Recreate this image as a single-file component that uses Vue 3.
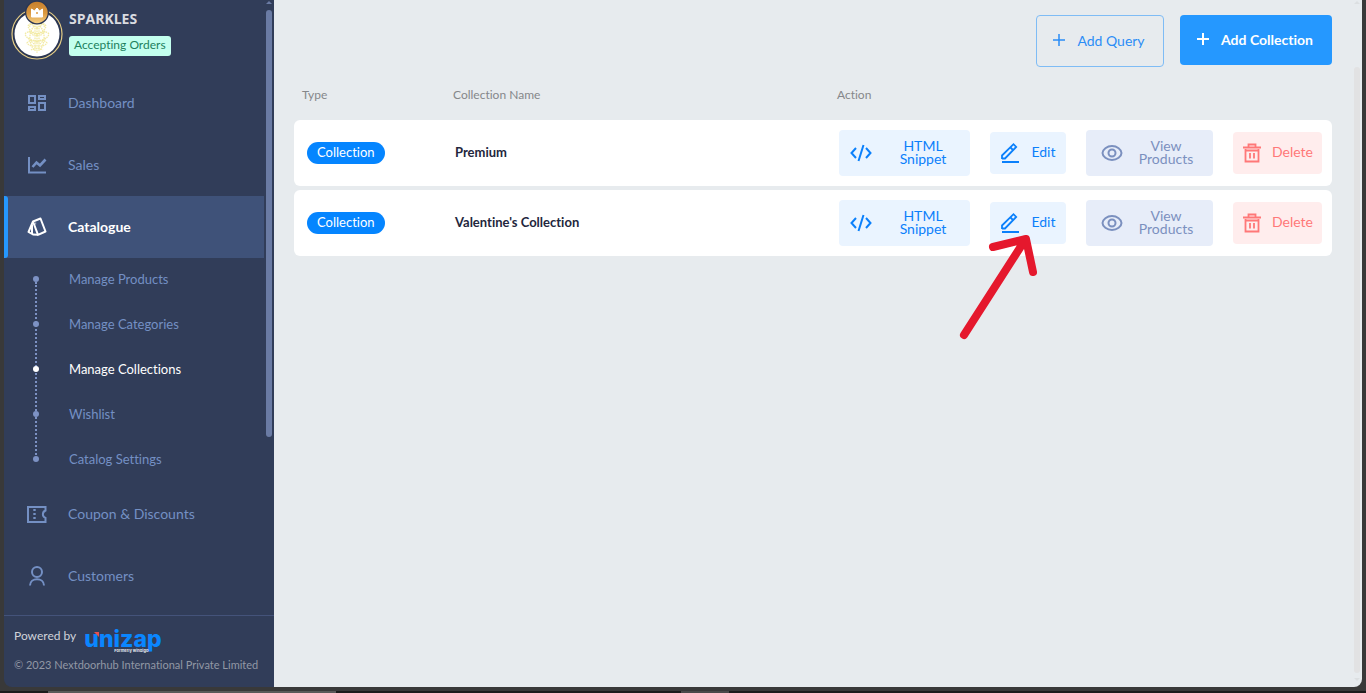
<script setup>
import { ref } from 'vue'

const topItems = [
  { label: 'Dashboard', icon: 'grid' },
  { label: 'Sales', icon: 'chart' },
  { label: 'Catalogue', icon: 'cards', active: true },
]
const subItems = ['Manage Products', 'Manage Categories', 'Manage Collections', 'Wishlist', 'Catalog Settings']
const currentSub = ref('Manage Collections')
const bottomItems = [
  { label: 'Coupon & Discounts', icon: 'coupon' },
  { label: 'Customers', icon: 'person' },
]
const collections = [
  { type: 'Collection', name: 'Premium' },
  { type: 'Collection', name: "Valentine's Collection" },
]
</script>

<template>
  <div class="screen">
    <div class="window">
      <aside class="sidebar">
        <div class="side-scroll">
          <header class="profile">
            <svg class="avatar" viewBox="0 0 52 60" aria-hidden="true">
              <defs>
                <linearGradient id="gold" x1="0" y1="0" x2="0" y2="1">
                  <stop offset="0" stop-color="#c77f2c" />
                  <stop offset=".55" stop-color="#dc9a41" />
                  <stop offset="1" stop-color="#f5cf83" />
                </linearGradient>
              </defs>
              <circle cx="26" cy="34" r="25" fill="#2b3652" stroke="#e5cd86" stroke-width="1.2" />
              <circle cx="26" cy="34" r="22.5" fill="#fff" />
              <g fill="none" stroke="#f3eba6" stroke-width="1.3" stroke-dasharray="1.600 .8">
                <path d="M26 21v32M26 29c-4-6-8-5-9-3 1 5 5 6 9 8M26 29c4-6 8-5 9-3-1 5-5 6-9 8M26 36c-5-5-10-5-12-2 2 6 8 6 12 7M26 36c5-5 10-5 12-2-2 6-8 6-12 7M26 42c-4-2-8-2-10 1 3 4 7 3 10 3M26 42c4-2 8-2 10 1-3 4-7 3-10 3M20 50c3-2 9-2 12 0M22 24c-3-2-4 1-3 3M30 24c3-2 4 1 3 3" />
                <path d="M23 26c-5 6-6 16 0 24M29 26c5 6 6 16 0 24M17 38l6 6M35 38l-6 6M18 31l5 5M34 31l-5 5M24 23v28M28 23v28" />
              </g>
              <circle cx="26" cy="12.5" r="12" fill="#2b3652" />
              <circle cx="26" cy="12.5" r="10.7" fill="url(#gold)" />
              <path d="M20.500 9l3 2 2.500-3 2.500 3 3-2v8h-11z" fill="#fff" stroke="#fff" stroke-linejoin="round" />
              <circle cx="26" cy="13" r="1" fill="#dc9a41" />
            </svg>
            <div class="profile-text">
              <strong class="shop">SPARKLES</strong>
              <span class="status">Accepting Orders</span>
            </div>
          </header>
          <nav>
            <a v-for="item in topItems" :key="item.label" href="#" class="nav-item" :class="{ active: item.active }">
              <svg v-if="item.icon === 'grid'" class="nav-icon" viewBox="0 0 20 20" fill="none" stroke="currentColor" stroke-width="2">
                <path d="M2 3h6v7H2zM12 3h6v3h-6zM12 10h6v7h-6zM2 14h6v3H2z" />
              </svg>
              <svg v-else-if="item.icon === 'chart'" class="nav-icon" viewBox="0 0 20 20" fill="none" stroke="currentColor">
                <path d="M2 2v15.5h17" stroke-width="2" />
                <path d="M5.500 12l4-4.500 3.500 3L18.500 4.500" stroke-width="2.600" />
              </svg>
              <svg v-else class="nav-icon" viewBox="0 0 20 20" fill="none" stroke="currentColor" stroke-width="2" stroke-linejoin="round">
                <path d="M6 4.500L13.500 1.500l5 13-7.500 3.300z" />
                <path d="M6 4.500L1.500 15l4.500 2.500 5 .3M5 8v9" />
                <path d="M8.500 6.500h.6" />
              </svg>
              <span>{{ item.label }}</span>
            </a>
            <ul class="sub-list">
              <li v-for="sub in subItems" :key="sub">
                <a href="#" class="sub-item" :class="{ current: sub === currentSub }" @click.prevent="currentSub = sub">{{ sub }}</a>
              </li>
            </ul>
            <a v-for="item in bottomItems" :key="item.label" href="#" class="nav-item">
              <svg v-if="item.icon === 'coupon'" class="nav-icon" viewBox="0 0 20 20" fill="none" stroke="currentColor" stroke-width="2">
                <path d="M1 3h17.500v3.500c-3.500 1.500-3.500 6 0 7.500V18H1z" />
                <path d="M7.500 5v12" stroke-dasharray="2 2" stroke-width="2.400" />
              </svg>
              <svg v-else class="nav-icon" viewBox="0 0 20 20" fill="none" stroke="currentColor" stroke-width="2">
                <circle cx="10" cy="6" r="5" />
                <path d="M3 19.500c0-8.500 14-8.500 14 0" />
              </svg>
              <span>{{ item.label }}</span>
            </a>
          </nav>
          <div class="side-bar" aria-hidden="true"><i class="up"></i><i class="thumb"></i></div>
        </div>
        <footer class="side-footer">
          <div class="powered">
            <span>Powered by</span>
            <span class="brand">unizap<svg class="spark" viewBox="0 0 5 5" aria-hidden="true"><path d="M0 0h5v5z" fill="#e8504f" /></svg><small>Formerly windigo</small></span>
          </div>
          <p class="copyright">© 2023 Nextdoorhub International Private Limited</p>
        </footer>
      </aside>

      <main class="content">
        <div class="toolbar">
          <button type="button" class="add outline">
            <svg viewBox="0 0 14 14" aria-hidden="true"><path d="M7 1v12M1 7h12" stroke="currentColor" stroke-width="1.500" /></svg>
            Add Query
          </button>
          <button type="button" class="add solid">
            <svg viewBox="0 0 14 14" aria-hidden="true"><path d="M7 1v12M1 7h12" stroke="currentColor" stroke-width="2" /></svg>
            Add Collection
          </button>
        </div>
        <table>
          <colgroup><col class="c-type" /><col class="c-name" /><col class="c-action" /></colgroup>
          <thead>
            <tr><th scope="col">Type</th><th scope="col">Collection Name</th><th scope="col">Action</th></tr>
          </thead>
          <tbody>
            <tr v-for="(row, i) in collections" :key="row.name">
              <td><span class="pill">{{ row.type }}</span></td>
              <td class="name">{{ row.name }}</td>
              <td>
                <div class="actions">
                  <button type="button" class="act blue snippet">
                    <svg viewBox="0 0 22 22" fill="none" stroke="currentColor" stroke-width="2"><path d="M6 6L1.500 11 6 16M16 6l4.500 5-4.500 5M13.500 3L8.500 19" /></svg>
                    <span>HTML<br />Snippet</span>
                  </button>
                  <button type="button" class="act blue edit">
                    <svg viewBox="0 0 22 22" fill="none" stroke="currentColor" stroke-width="1.800"><path d="M3 17v-3.500L14.500 2.200l2.700 2.700L6 16.500H3M3 20h17M11.500 5.500l2.500 2.500" /></svg>
                    <span>Edit</span>
                    <svg v-if="i === 1" class="pointer" viewBox="0 0 80 108" fill="none" stroke="#e5182d" stroke-width="8" stroke-linecap="round" stroke-linejoin="round" aria-hidden="true"><path d="M5 101L66 6M34 13l33-8 7 33" /></svg>
                  </button>
                  <button type="button" class="act slate view">
                    <svg viewBox="0 0 22 22" fill="none" stroke="currentColor" stroke-width="2"><path d="M1.500 11c0-3.500 4.500-7 9.500-7s9.500 3.500 9.500 7-4.500 7-9.500 7-9.500-3.500-9.500-7z" /><circle cx="11" cy="11" r="3.500" /></svg>
                    <span>View<br />Products</span>
                  </button>
                  <button type="button" class="act red delete">
                    <svg viewBox="0 0 22 22" fill="none" stroke="currentColor" stroke-width="1.800"><path d="M4.500 7v12.500h13V7M2 5.500h18M7.500 5V2.500h7V5M9 11v5.500M13 11v5.500M4.500 8.500h13" /></svg>
                    <span>Delete</span>
                  </button>
                </div>
              </td>
            </tr>
          </tbody>
        </table>
        <div class="main-bar" aria-hidden="true"><i class="up"></i><i class="thumb"></i><i class="down"></i></div>
      </main>
    </div>
    <div class="taskbar" aria-hidden="true"><i></i><i></i></div>
  </div>
</template>

<style>
html, body { margin: 0; background: #393939; }
</style>

<style scoped>
* { box-sizing: border-box; }
.screen {
  height: 100vh; display: flex; flex-direction: column; overflow: hidden;
  background: #393939; font-family: Lato, "Open Sans", sans-serif; font-size: 13px;
  font-variant-ligatures: none;
}
.window {
  flex: 1; min-height: 0; margin: 0 4px 4px; display: grid; grid-template-columns: 270px 1fr;
  border-radius: 0 0 8px 8px; overflow: hidden;
}
a { color: inherit; text-decoration: none; }
button { font: inherit; cursor: pointer; border: 0; }
i { display: block; }

.sidebar { display: flex; flex-direction: column; min-height: 0; background: #313d59; color: #7490c4; }
.side-scroll { position: relative; flex: 1; min-height: 0; overflow: hidden; }
.profile { display: flex; height: 72px; padding-left: 7px; gap: 6px; }
.avatar { width: 52px; height: 60px; flex: none; }
.profile-text { display: flex; flex-direction: column; align-items: flex-start; padding-top: 10px; gap: 8px; }
.shop { font: 700 14px/18px "Open Sans", sans-serif; color: #d9dbe0; }
.status { padding: 0 5px 2px; border-radius: 3px; background: #c3ffee; color: #1d7f5d; font-size: 12px; line-height: 18px; }
.nav-item {
  display: flex; align-items: center; gap: 21px; height: 62px; margin-right: 10px;
  padding-left: 23px; font-size: 14px;
}
.nav-icon { width: 20px; height: 20px; flex: none; }
.nav-item span { padding-bottom: 2px; }
.nav-item.active { background: #3f5279; color: #fff; font-weight: 700; position: relative; }
.nav-item.active::before {
  content: ""; position: absolute; inset: 0 auto 0 0; width: 4px; background: #2598ff; border-radius: 0 3px 3px 0;
}
.sub-list { list-style: none; margin: 0; padding: 0; position: relative; }
.sub-list::before {
  content: ""; position: absolute; left: 31px; top: 24px; bottom: 24px; border-left: 2px dotted #7d92c4;
}
.sub-item { display: flex; align-items: center; gap: 30px; height: 45px; padding: 0 0 3px 29px; }
.sub-item::before { content: ""; width: 6px; height: 6px; border-radius: 50%; background: #7d92c4; position: relative; }
.sub-item.current { color: #fff; }
.sub-item.current::before { background: #fff; }

.side-bar { position: absolute; top: 0; right: 2px; bottom: 0; width: 6px; padding-top: 1px; }
.side-bar .thumb { height: 427px; margin-top: 6px; border-radius: 3px; background: #6a7ba4; }
.up { border: 3px solid transparent; border-top: 0; border-bottom-color: #6a7ba4; }
.down { border: 3px solid transparent; border-bottom: 0; border-top-color: #dcdfe1; }

.side-footer { height: 72px; border-top: 1px solid #44537a; padding: 10px 10px 0; color: #d0d3da; }
.powered { display: flex; gap: 8px; height: 24px; font-size: 12px; line-height: 20px; }
.brand { position: relative; color: #0a86ff; font: 800 23px/26px Inter, sans-serif; }
.brand small { position: absolute; left: 30px; top: 22px; font: 700 4px/5px Inter, sans-serif; color: #e5e8ef; white-space: nowrap; }
.spark { position: absolute; left: 10px; top: 6px; width: 5px; height: 5px; }
.copyright { margin: 5px 0 0; font-size: 11px; line-height: 20px; color: #9298a5; white-space: nowrap; }

.content { position: relative; background: #e7ebee; padding: 15px 30px 0 20px; min-width: 0; }
.toolbar { display: flex; justify-content: flex-end; align-items: flex-start; gap: 16px; }
.add { display: flex; align-items: center; justify-content: center; gap: 11px; height: 50px; padding: 0 3px 2px 0; border-radius: 4px; font-size: 14px; }
.add svg { width: 14px; height: 14px; }
.outline { width: 128px; height: 52px; background: transparent; border: 1px solid #7fbcf5; color: #2b8df6; }
.solid { width: 152px; background: #2598ff; color: #fff; font-weight: 700; }

table { width: 100%; margin-top: 2px; table-layout: fixed; border-collapse: separate; border-spacing: 0 4px; }
.c-type { width: 151px; }
.c-action { width: 503px; }
th { height: 43px; padding: 0 8px; text-align: left; font-size: 12px; font-weight: 400; color: #85878a; }
td { height: 66px; padding: 0 10px; background: #fff; }
td:first-child { border-radius: 6px 0 0 6px; padding-left: 13px; }
td:last-child { border-radius: 0 6px 6px 0; }
.pill { display: inline-block; height: 22px; padding: 0 10px; border-radius: 11px; background: #0585ff; color: #fff; line-height: 20px; }
.name { padding-bottom: 3px; font-weight: 700; color: #23263c; }
.actions { display: flex; align-items: center; justify-content: space-between; }
.act { position: relative; display: flex; align-items: center; height: 42px; padding: 0 10px; border-radius: 4px; font-size: 14px; line-height: 13px; }
.act svg { width: 22px; height: 22px; flex: none; }
.act span { flex: 1; text-align: center; padding-bottom: 3px; }
.blue { background: #eaf4ff; color: #0b80fb; }
.slate { background: #e7edf9; color: #7b90bf; }
.red { background: #ffeded; color: #ff7878; }
.snippet { width: 131px; height: 46px; padding: 0 11px; }
.snippet span { padding-left: 15px; }
.edit { width: 76px; padding-right: 8px; padding-left: 9px; }
.edit span { padding-left: 8px; }
.view { width: 127px; height: 46px; padding: 0 14px 0 15px; }
.view span { padding-left: 10px; }
.delete { width: 89px; padding: 0 6px 0 8px; }
.delete span { padding-left: 6px; }
.act .pointer { position: absolute; z-index: 2; left: -31px; top: 32px; width: 80px; height: 108px; pointer-events: none; }

.main-bar { position: absolute; top: 0; right: 2px; bottom: 0; width: 6px; padding: 1px 0 6px; display: flex; flex-direction: column; }
.main-bar .up { border-bottom-color: #dcdfe1; }
.main-bar .thumb { flex: 1; margin: 63px 0 5px; border-radius: 3px; background: #e2e2e3; }

.taskbar { height: 2px; display: flex; gap: 345px; padding-left: 48px; background: #1c1c1c; }
.taskbar i { width: 288px; background: #5a5a5a; }
.taskbar i + i { width: 48px; background: #4a4a4a; }
</style>
